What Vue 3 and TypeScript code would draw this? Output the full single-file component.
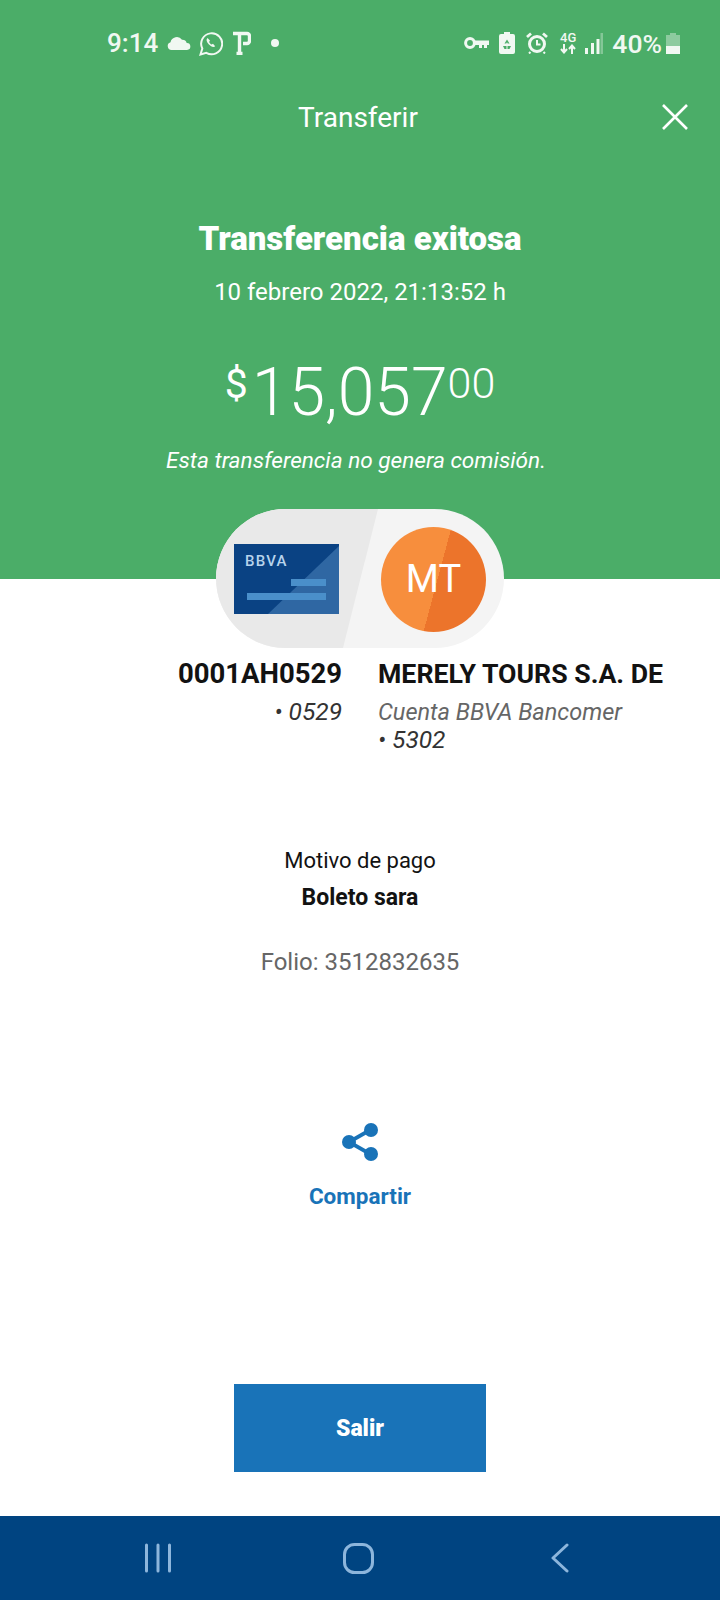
<template>
  <div class="screen">
    <section class="hero">
      <div class="status">
        <div class="status-left">
          <span class="clock">9:14</span>
          <svg class="cloud" width="24" height="14" viewBox="0 0 24 14"><path d="M4.500 14a4 4 0 0 1-1-7.800A6.500 6.500 0 0 1 15 3.700a4.600 4.600 0 0 1 4.700 3.300A3.500 3.500 0 0 1 20 14z" fill="#f1f8f2"/></svg>
          <svg class="whatsapp" width="24" height="25" viewBox="0 0 24 25" fill="none" stroke="#f1f8f2"><path d="M1.500 23.500l1.800-6A10.500 10.500 0 1 1 7.300 21.800z" stroke-width="2"/><path d="M8.500 7c-1.700 1.500-1 4 1.200 6.300s4.800 3.500 6.500 2l-2.200-2.500-1.400.8c-1-.5-2-1.600-2.500-2.700l.9-1.300z" fill="#f1f8f2" stroke="none"/></svg>
          <svg class="pin" width="18" height="24" viewBox="0 0 18 24" fill="none" stroke="#f1f8f2" stroke-width="3.400"><path d="M0 2.500h14a2.500 2.500 0 0 1 2.500 2.500v5a2.500 2.500 0 0 1-2.500 2.500H10M6.500 2.500V21M3.500 22.500h6" /></svg>
          <span class="dot"></span>
        </div>
        <div class="status-right">
          <svg class="key" width="25" height="12" viewBox="0 0 25 12" fill="none"><circle cx="6" cy="6" r="4.400" stroke="#f1f8f2" stroke-width="3"/><path d="M10 3.500h15V8h-2v3h-3V8h-2v3h-3V8h-5z" fill="#f1f8f2"/></svg>
          <svg class="saver" width="16" height="22" viewBox="0 0 16 22"><path d="M5 0h6v2h3a2 2 0 0 1 2 2v16a2 2 0 0 1-2 2H2a2 2 0 0 1-2-2V4a2 2 0 0 1 2-2h3z" fill="#f1f8f2"/><path d="M8 7.500l2.500 4h-1.800L8 10.300l-.7 1.200H5.500zM4 14h3.500v3H5.500zM8.500 14H12l-1.500 3h-2z" fill="#4bad68"/></svg>
          <svg class="alarm" width="22" height="22" viewBox="0 0 22 22" fill="none" stroke="#f1f8f2"><circle cx="11" cy="12" r="7.500" stroke-width="3"/><path d="M11 8v4.500h3.500" stroke-width="2"/><path d="M1 5l4-3.500M21 5l-4-3.500" stroke-width="2.800"/><path d="M4.500 20l-1.500 1.500M17.500 20l1.500 1.500" stroke-width="2"/></svg>
          <div class="net">
            <span>4G</span>
            <svg width="16" height="10" viewBox="0 0 16 10" fill="none" stroke="#f1f8f2" stroke-width="2"><path d="M4 0v8M1 5l3 3.500L7 5M12 10V1.500M9 5l3-3.500L15 5"/></svg>
          </div>
          <svg class="signal" width="18" height="21" viewBox="0 0 18 21" fill="#f1f8f2"><rect x="0" y="15" width="3" height="6"/><rect x="6" y="10" width="3" height="11"/><rect x="11.500" y="6" width="3" height="15"/><rect x="15.500" y="0" width="2.500" height="21" opacity=".35"/></svg>
          <span class="pct">40%</span>
          <svg class="battery" width="14" height="21" viewBox="0 0 14 21"><path d="M4 0h6v2h4v11H0V2h4z" fill="#f1f8f2" opacity=".4"/><rect y="13" width="14" height="8" fill="#f1f8f2"/></svg>
        </div>
      </div>

      <div class="nav">
        <span>Transferir</span>
        <svg class="close" width="28" height="28" viewBox="0 0 28 28" stroke="#fff" stroke-width="2.600" fill="none"><path d="M2 2l24 24M26 2L2 26"/></svg>
      </div>

      <h1 class="title">Transferencia exitosa</h1>
      <p class="date">10 febrero 2022, 21:13:52 h</p>
      <p class="amount"><sup class="sign">$</sup>15,057<sup class="cents">00</sup></p>
      <p class="note">Esta transferencia no genera comisión.</p>
    </section>

    <div class="pill">
      <div class="pill-left"></div>
      <div class="card">
        <div class="card-shade"></div>
        <span class="card-brand">BBVA</span>
        <div class="card-line short"></div>
        <div class="card-line long"></div>
      </div>
      <div class="avatar">MT</div>
    </div>

    <div class="accounts">
      <div class="account from">
        <strong>0001AH0529</strong>
        <em>• 0529</em>
      </div>
      <div class="account to">
        <strong>MERELY TOURS S.A. DE</strong>
        <span class="bank">Cuenta BBVA Bancomer</span>
        <em>• 5302</em>
      </div>
    </div>

    <div class="reason">
      <p>Motivo de pago</p>
      <p class="reason-value">Boleto sara</p>
      <p class="folio">Folio: 3512832635</p>
    </div>

    <div class="share">
      <svg width="36" height="38" viewBox="0 0 36 38" fill="#1973b8" stroke="#1973b8"><path d="M29 6.500L7 19l22 12.500" fill="none" stroke-width="3.800"/><circle cx="29" cy="7" r="7" stroke="none"/><circle cx="7" cy="19" r="7" stroke="none"/><circle cx="29" cy="31" r="7" stroke="none"/></svg>
      <span>Compartir</span>
    </div>

    <button class="exit">Salir</button>

    <div class="softkeys">
      <svg width="28" height="30" viewBox="0 0 28 30" stroke="#8db6dc" stroke-width="3" stroke-linecap="round"><path d="M2.500 2v26M14 2v26M25.500 2v26"/></svg>
      <svg width="31" height="31" viewBox="0 0 31 31" fill="none" stroke="#8db6dc" stroke-width="3"><rect x="1.500" y="1.500" width="28" height="28" rx="10"/></svg>
      <svg width="18" height="30" viewBox="0 0 18 30" fill="none" stroke="#8db6dc" stroke-width="3" stroke-linecap="round" stroke-linejoin="round"><path d="M16 2L2 15l14 13"/></svg>
    </div>
  </div>
</template>

<script setup lang="ts"></script>

<style>
html,
body {
  margin: 0;
  background: #fff;
}
</style>

<style scoped>
.screen {
  width: 720px;
  height: 1600px;
  position: relative;
  display: flex;
  flex-direction: column;
  font-family: Roboto, "Liberation Sans", sans-serif;
  color: #121212;
  overflow: hidden;
}
p,
h1 {
  margin: 0;
}
.hero {
  height: 579px;
  flex: none;
  background: #4bad68;
  color: #fff;
  text-align: center;
}
.status {
  height: 44px;
  padding: 21px 40px 0 107px;
  display: flex;
  justify-content: space-between;
  align-items: center;
  color: #f1f8f2;
}
.status-left,
.status-right {
  display: flex;
  align-items: center;
}
.clock {
  font-size: 26px;
  font-weight: 500;
}
.cloud {
  margin-left: 9px;
}
.whatsapp {
  margin-left: 8px;
}
.pin {
  margin-left: 10px;
}
.dot {
  width: 8px;
  height: 8px;
  border-radius: 50%;
  background: #f1f8f2;
  margin-left: 20px;
}
.saver {
  margin-left: 10px;
}
.alarm {
  margin-left: 11px;
}
.net {
  display: flex;
  flex-direction: column;
  align-items: center;
  font-size: 13px;
  font-weight: 500;
  line-height: 12px;
  margin-left: 12px;
}
.signal {
  margin-left: 9px;
}
.pct {
  font-size: 26.500px;
  font-weight: 500;
  margin-left: 9px;
}
.battery {
  margin-left: 4px;
}
.nav {
  position: relative;
  margin-top: 35px;
  height: 36px;
  padding-right: 4px;
  font-size: 28px;
  line-height: 36px;
}
.close {
  position: absolute;
  right: 31px;
  top: 3px;
}
.title {
  margin-top: 83px;
  font-size: 33px;
  line-height: 40px;
  font-weight: 900;
}
.date {
  margin-top: 18px;
  font-size: 24px;
  line-height: 30px;
}
.amount {
  margin-top: 46px;
  font-size: 66px;
  line-height: 80px;
  font-weight: 300;
}
.amount sup {
  font-size: 41px;
  font-weight: 400;
  line-height: 0;
  vertical-align: 17px;
}
.amount .sign {
  margin-right: 4px;
}
.amount .cents {
  font-size: 43px;
  font-weight: 300;
}
.note {
  margin-top: 13px;
  padding-right: 8px;
  font-size: 22.600px;
  line-height: 30px;
  font-style: italic;
}
.pill {
  position: absolute;
  left: 216px;
  top: 509px;
  width: 288px;
  height: 139px;
  border-radius: 70px;
  background: #f4f4f4;
  overflow: hidden;
}
.pill-left {
  position: absolute;
  inset: 0;
  background: #e9e9e9;
  clip-path: polygon(0 0, 162px 0, 127px 100%, 0 100%);
}
.card {
  position: absolute;
  left: 18px;
  top: 35px;
  width: 105px;
  height: 70px;
  background: #0a4283;
  overflow: hidden;
}
.card-brand {
  position: absolute;
  left: 11px;
  top: 8px;
  font-size: 15px;
  font-weight: 500;
  line-height: 18px;
  letter-spacing: 1.200px;
  color: #b7d3ec;
}
.card-shade {
  position: absolute;
  inset: 0;
  background: #2f67a3;
  clip-path: polygon(100% 2px, 100% 100%, 34px 100%);
}
.card-line {
  position: absolute;
  height: 6.500px;
  background: #4a8fca;
}
.card-line.short {
  left: 57px;
  top: 35px;
  width: 35px;
}
.card-line.long {
  left: 13px;
  top: 49px;
  width: 79px;
}
.avatar {
  position: absolute;
  left: 165px;
  top: 18px;
  width: 105px;
  height: 105px;
  border-radius: 50%;
  background: linear-gradient(105deg, #f78e3d 0 53%, #ec742b 53% 100%);
  color: #fff;
  font-size: 38px;
  line-height: 105px;
  text-align: center;
}
.accounts {
  margin-top: 78px;
  display: grid;
  grid-template-columns: 342px 1fr;
  column-gap: 36px;
}
.account {
  display: flex;
  flex-direction: column;
}
.account strong {
  font-size: 26.700px;
  line-height: 34px;
  font-weight: 700;
  white-space: nowrap;
}
.from strong {
  font-size: 27.500px;
}
.account em {
  font-size: 24.500px;
  line-height: 28px;
  color: #333;
}
.from {
  text-align: right;
}
.from em {
  margin-top: 7px;
}
.bank {
  margin-top: 7px;
  font-size: 23.500px;
  line-height: 28px;
  font-style: italic;
  color: #666;
}
.reason {
  margin-top: 92px;
  text-align: center;
  font-size: 22px;
  line-height: 30px;
}
.reason-value {
  margin-top: 7px;
  font-size: 23px;
  font-weight: 700;
}
.folio {
  margin-top: 34px;
  font-size: 24px;
  color: #666;
}
.share {
  margin-top: 146px;
  display: flex;
  flex-direction: column;
  align-items: center;
  gap: 21px;
  color: #1973b8;
  font-size: 22.500px;
  font-weight: 700;
  line-height: 28px;
}
.exit {
  align-self: center;
  margin-top: 174px;
  width: 252px;
  height: 88px;
  border: none;
  background: #1973b8;
  color: #fff;
  font-family: inherit;
  font-size: 23px;
  font-weight: 900;
}
.softkeys {
  position: absolute;
  left: 0;
  right: 0;
  bottom: 0;
  height: 84px;
  background: #004481;
  display: grid;
  grid-template-columns: repeat(3, 201px);
  justify-content: center;
  justify-items: center;
  align-items: center;
  padding-right: 3px;
  box-sizing: border-box;
}
</style>
